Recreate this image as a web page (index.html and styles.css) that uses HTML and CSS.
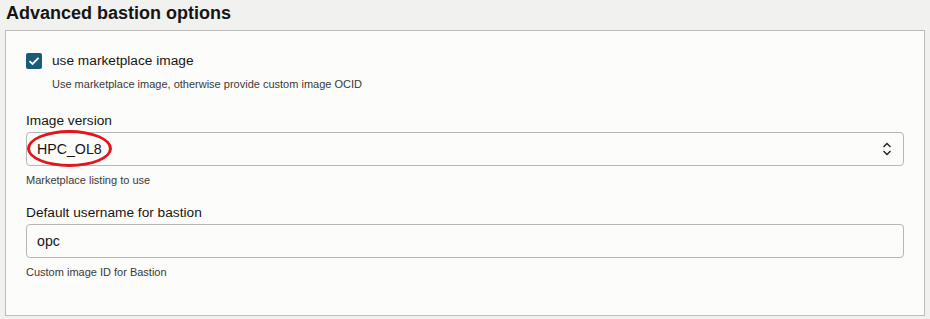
FILE: index.html
```html
<!DOCTYPE html>
<html lang="en">
<head>
  <meta charset="UTF-8">
  <title>Advanced bastion options</title>
  <link rel="stylesheet" href="styles.css">
</head>
<body>
  <h2 class="title">Advanced bastion options</h2>

  <div class="panel">
    <div class="check-row">
      <span class="checkbox">
        <svg width="12" height="10" viewBox="0 0 12 10"><path d="M1.5 5.2 L4.5 8 L10.5 1.8" fill="none" stroke="#fff" stroke-width="1.8"/></svg>
      </span>
      <div>
        <div class="check-label">use marketplace image</div>
        <div class="hint">Use marketplace image, otherwise provide custom image OCID</div>
      </div>
    </div>

    <div class="field">
      <div class="label">Image version</div>
      <div class="box select">
        <span class="value">HPC_OL8</span>
        <span class="mark"></span>
        <svg class="arrows" width="10" height="14" viewBox="0 0 10 14"><path d="M1.5 5 L5 1.5 L8.5 5 M1.5 9 L5 12.5 L8.5 9" fill="none" stroke="#222" stroke-width="1.4"/></svg>
      </div>
      <div class="hint">Marketplace listing to use</div>
    </div>

    <div class="field">
      <div class="label">Default username for bastion</div>
      <div class="box">
        <span class="value">opc</span>
      </div>
      <div class="hint">Custom image ID for Bastion</div>
    </div>
  </div>
</body>
</html>
```

FILE: styles.css
```css
body {
  margin: 0;
  padding: 0 5px;
  background-color: #f1f1f0;
  font-family: "Liberation Sans", Arial, sans-serif;
  color: #161513;
}

.title {
  margin: 0;
  height: 30px;
  padding-top: 2px;
  box-sizing: border-box;
  font-size: 18px;
  font-weight: 700;
  line-height: 22px;
  padding-left: 1px;
}

/* panel */
.panel {
  width: 920px;
  height: 286px;
  box-sizing: border-box;
  background: #fcfcfb;
  border: 1px solid #bdbcba;
  padding: 21px 20px 0 20px;
}

.check-row {
  display: flex;
  gap: 10px;
}
.checkbox {
  width: 16px;
  height: 16px;
  border-radius: 2px;
  background: #1a5a7a;
  display: flex;
  align-items: center;
  justify-content: center;
  flex-shrink: 0;
  margin-top: 1px;
}
.check-label {
  font-size: 13.7px;
  line-height: 18px;
}
.hint {
  font-size: 11px;
  line-height: 14px;
  color: #3a3936;
  margin-top: 7px;
}

.field {
  margin-top: 21px;
}
.field + .field {
  margin-top: 17px;
}
.label {
  font-size: 13.7px;
  line-height: 18px;
  margin-bottom: 2px;
}
.box {
  height: 34px;
  box-sizing: border-box;
  border: 1px solid #b7b6b4;
  border-radius: 4px;
  background: #fcfcfb;
  display: flex;
  align-items: center;
  padding: 0 11px 0 10px;
  position: relative;
}
.box .value {
  font-size: 14.2px;
}
.select .arrows {
  margin-left: auto;
}
.mark {
  position: absolute;
  left: 0;
  top: -3px;
  width: 79px;
  height: 31px;
  border: 3px solid #e3141c;
  border-radius: 50%;
}
```
